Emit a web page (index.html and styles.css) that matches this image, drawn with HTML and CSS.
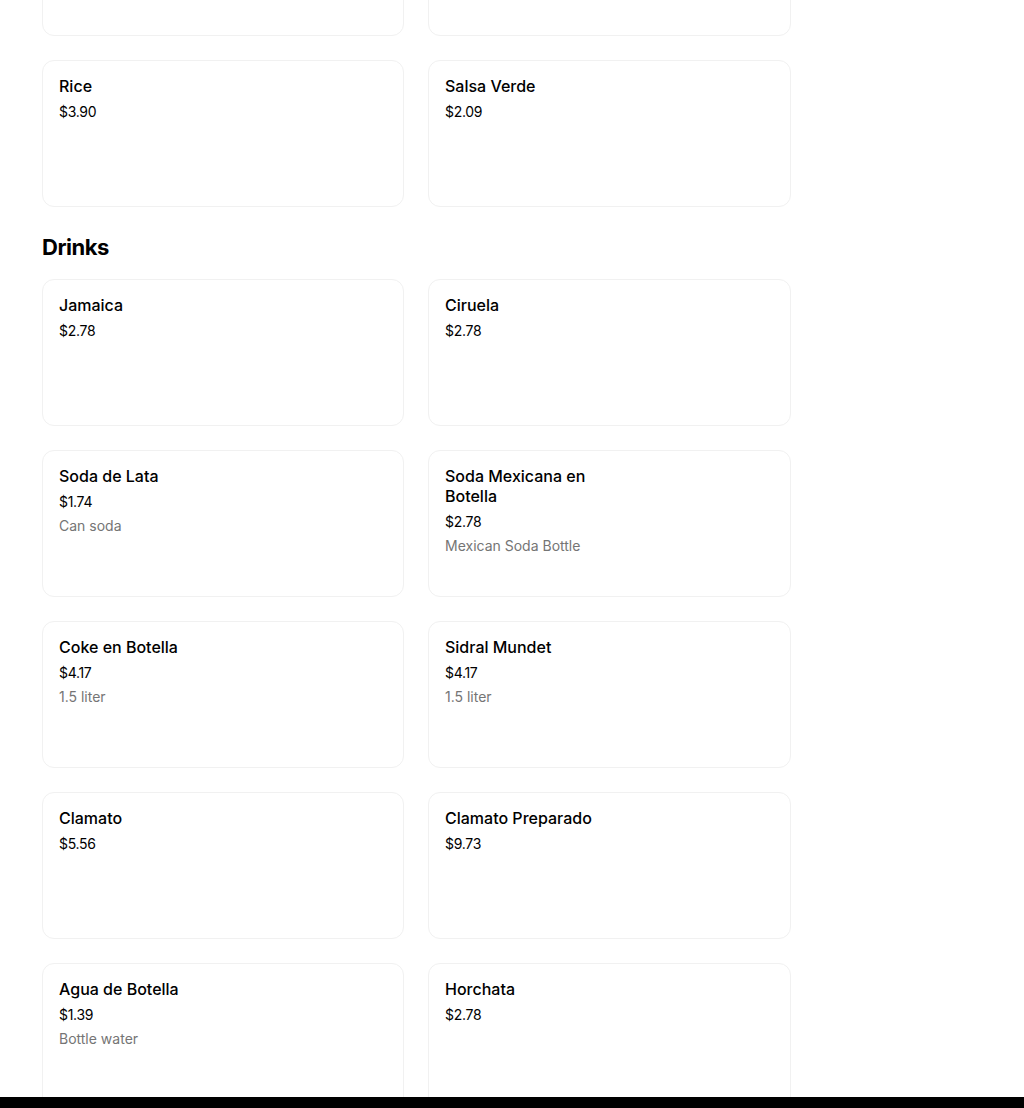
FILE: index.html
```html
<!DOCTYPE html>
<html lang="en">
<head>
<meta charset="utf-8">
<title>Menu</title>
<link rel="stylesheet" href="styles.css">
</head>
<body>
<main class="menu">
  <section class="section">
    <div class="grid">
      <div class="card"><div class="info"></div></div>
      <div class="card"><div class="info"></div></div>
      <div class="card"><div class="info"><div class="title">Rice</div><div class="price">$3.90</div></div></div>
      <div class="card"><div class="info"><div class="title">Salsa Verde</div><div class="price">$2.09</div></div></div>
    </div>
  </section>
  <section class="section">
    <h2 class="heading">Drinks</h2>
    <div class="grid">
      <div class="card"><div class="info"><div class="title">Jamaica</div><div class="price">$2.78</div></div></div>
      <div class="card"><div class="info"><div class="title">Ciruela</div><div class="price">$2.78</div></div></div>
      <div class="card"><div class="info"><div class="title">Soda de Lata</div><div class="price">$1.74</div><div class="desc">Can soda</div></div></div>
      <div class="card"><div class="info"><div class="title">Soda Mexicana en Botella</div><div class="price">$2.78</div><div class="desc">Mexican Soda Bottle</div></div></div>
      <div class="card"><div class="info"><div class="title">Coke en Botella</div><div class="price">$4.17</div><div class="desc">1.5 liter</div></div></div>
      <div class="card"><div class="info"><div class="title">Sidral Mundet</div><div class="price">$4.17</div><div class="desc">1.5 liter</div></div></div>
      <div class="card"><div class="info"><div class="title">Clamato</div><div class="price">$5.56</div></div></div>
      <div class="card"><div class="info"><div class="title">Clamato Preparado</div><div class="price">$9.73</div></div></div>
      <div class="card"><div class="info"><div class="title">Agua de Botella</div><div class="price">$1.39</div><div class="desc">Bottle water</div></div></div>
      <div class="card"><div class="info"><div class="title">Horchata</div><div class="price">$2.78</div></div></div>
    </div>
  </section>
</main>
<div class="bottom-bar"></div>
</body>
</html>
```
FILE: styles.css
```css
* { box-sizing: border-box; }
html, body { margin: 0; padding: 0; background: #fff; }
body {
  font-family: Inter, "Liberation Sans", sans-serif;
  color: #000;
  overflow: hidden;
  height: 1108px;
}
.menu {
  margin-top: -111px;
  padding-left: 42px;
  width: 791px;
}
.section { display: flex; flex-direction: column; }
.section + .section { margin-top: 24px; }
.heading {
  margin: 0 0 16px;
  font-size: 22px;
  line-height: 32px;
  font-weight: 700;
  letter-spacing: -0.5px;
}
.grid {
  display: grid;
  grid-template-columns: 362px 363px;
  column-gap: 24px;
  row-gap: 24px;
}
.card {
  height: 147px;
  border: 1px solid #f1f1f1;
  border-radius: 12px;
  padding: 15px 16px 16px;
  background: #fff;
}
.info { display: flex; flex-direction: column; max-width: 170px; }
.title {
  font-size: 16px;
  line-height: 20px;
  font-weight: 500;
}
.price {
  margin-top: 6px;
  font-size: 14px;
  line-height: 20px;
  font-weight: 400;
  letter-spacing: -0.3px;
}
.desc {
  margin-top: 4px;
  font-size: 14px;
  line-height: 20px;
  color: #757575;
}
.bottom-bar {
  position: fixed;
  left: 0; right: 0; bottom: 0;
  height: 11px;
  background: #000;
}
```
